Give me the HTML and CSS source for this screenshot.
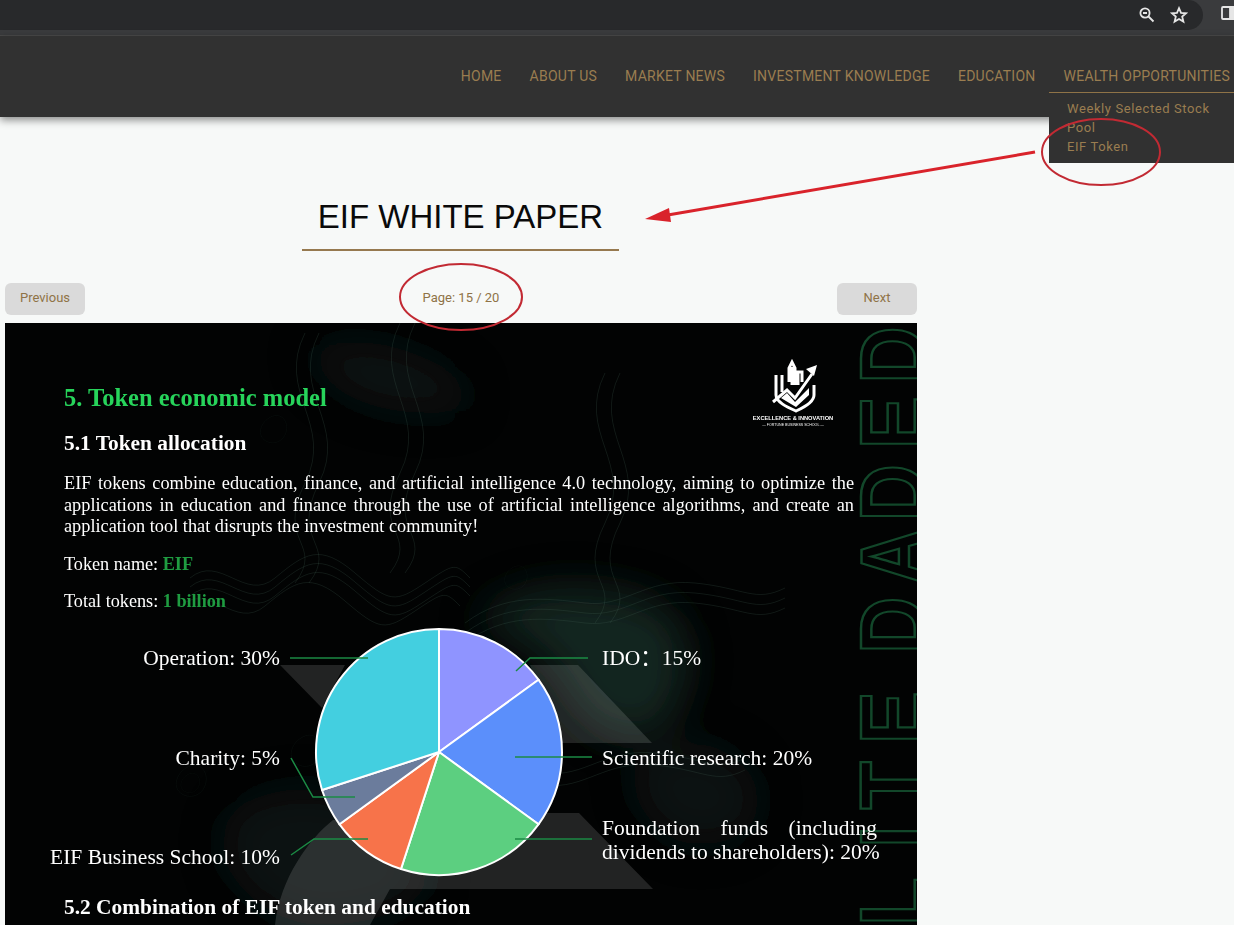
FILE: index.html
```html
<!DOCTYPE html>
<html lang="en">
<head>
    <meta charset="UTF-8">
    <title>EIF White Paper</title>
    <link rel="stylesheet" href="styles.css">
</head>
<body>
    <div class="browser-bar">
        <div class="omnibox">
            <svg class="bar-icon" viewBox="0 0 18 18"><circle cx="7" cy="7" r="4.6"/><path d="M5 7h4M10.5 10.5l5 5"/></svg>
            <svg class="bar-icon" viewBox="0 0 18 18"><path d="M9 2.2l2 4.7 5 .4-3.8 3.3 1.2 5L9 13l-4.4 2.6 1.2-5L2 7.3l5-.4z"/></svg>
        </div>
        <svg class="bar-icon side-panel" viewBox="0 0 18 18"><rect x="2" y="3" width="14" height="12" rx="1"/><path d="M10 3v12h6V3z" class="side-fill"/></svg>
    </div>

    <header class="site-header">
        <nav class="main-nav">
            <a href="#">HOME</a>
            <a href="#">ABOUT US</a>
            <a href="#">MARKET NEWS</a>
            <a href="#">INVESTMENT KNOWLEDGE</a>
            <a href="#">EDUCATION</a>
            <a href="#">WEALTH OPPORTUNITIES</a>
        </nav>
        <div class="dropdown">
            <a href="#">Weekly Selected Stock Pool</a>
            <a href="#">EIF Token</a>
        </div>
    </header>

    <main class="paper">
        <h1 class="paper-title">EIF WHITE PAPER</h1>
        <div class="pager">
            <button>Previous</button>
            <span>Page: 15 / 20</span>
            <button>Next</button>
        </div>

        <section class="slide">
            <svg class="slide-bg" viewBox="0 0 912 602">
                <defs>
                    <filter id="soft"><feGaussianBlur stdDeviation="20"/></filter>
                    <path id="wave1" d="M185 255c30-25 55 25 85 0s45-35 80-5 40 30 70 10 30-20 45-5"/>
                    <path id="wave2" d="M460 300c40-30 80-25 120-20s60-25 110-20 60 20 90 5"/>
                    <path id="wave3" d="M300 10c-30 60 30 90 0 150s20 60-10 100"/>
                    <path id="wave4" d="M40 0c30-20 55 5 50 35s-35 45-60 30-15-50 10-65z"/>
                </defs>
                <g filter="url(#soft)">
                    <path class="smear" d="M470 300c40-40 100-40 150-30s70 40 60 90-50 70-90 40-20-70-120-100z"/>
                    <path class="smear dim" d="M300 30c40-20 90-10 130 10s50 50 0 50-100-10-130-60z"/>
                    <path class="smear dim" d="M240 480c60-30 130-10 170 40s-20 80-90 82-140-80-80-122z"/>
                    <path class="smear dim" d="M640 430c40-20 90-10 110 30s-30 70-70 60-70-70-40-90z"/>
                </g>
                <g class="contours">
                    <use href="#wave1"/>
                    <use href="#wave1" y="9"/>
                    <use href="#wave1" y="18"/>
                    <use href="#wave1" x="-10" y="28"/>
                    <use href="#wave2"/>
                    <use href="#wave2" y="10"/>
                    <use href="#wave2" y="20"/>
                    <use href="#wave2" x="-40" y="170"/>
                    <use href="#wave2" x="-40" y="182"/>
                    <use href="#wave3"/>
                    <use href="#wave3" x="14"/>
                    <use href="#wave3" x="95" y="-10"/>
                    <use href="#wave3" x="110" y="-10"/>
                    <use href="#wave3" x="300" y="40"/>
                    <use href="#wave3" x="315" y="40"/>
                    <use href="#wave4" transform="translate(165 445) scale(.4)"/>
                    <use href="#wave4" transform="translate(172 452) scale(.25)"/>
                    <use href="#wave4" transform="translate(280 415) scale(.4)"/>
                    <use href="#wave4" transform="translate(495 245) scale(.3)"/>
                    <use href="#wave4" transform="translate(250 95) scale(.35)"/>
                </g>
                <g class="shards">
                    <polygon points="275,342 340,342 317,385"/>
                    <polygon points="525,342 573,342 647,420 555,420"/>
                    <path d="M328 497C305 515 275 555 270 602H365L385 566H648L574 490H535z"/>
                </g>
                <text class="side-word" transform="translate(920 602) rotate(-90) scale(.85 1)" x="-1 91 136 213 290 319 400 475 560 637" y="0">LITE DADED</text>
            </svg>

            <svg class="slide-logo" viewBox="0 0 95 78">
                <path class="logo-line" d="M31 20v20c0 7 11 12 20 16 9-4 18-9 18-16V30M37 20v17M47 30V12M44 27V13l3-6 3 6v17M53 30V17h4v10"/>
                <path class="logo-fill" d="M36 43l6-5 8 9 14-14v7L51 52z"/>
                <path class="logo-line" d="M28 47l14-12 8 8 17-24"/>
                <path class="logo-fill" d="M72 10l-11 4 8 7z"/>
                <text class="logo-name" x="48" y="65">EXCELLENCE &amp; INNOVATION</text>
                <text class="logo-sub" x="48" y="71">— FORTUNE BUSINESS SCHOOL —</text>
            </svg>

            <div class="slide-copy">
                <h2>5. Token economic model</h2>
                <h3>5.1 Token allocation</h3>
                <p class="intro">EIF tokens combine education, finance, and artificial intelligence 4.0 technology, aiming to optimize the applications in education and finance through the use of artificial intelligence algorithms, and create an application tool that disrupts the investment community!</p>
                <p class="fact">Token name: <b>EIF</b></p>
                <p class="fact">Total tokens: <b>1 billion</b></p>
            </div>

            <svg class="pie" viewBox="0 0 912 602">
                <g class="slices">
                    <path fill="#8f94ff" d="M434 429V306A123 123 0 0 1 533.500 356.700z"/>
                    <path fill="#5b8ffb" d="M434 429L533.500 356.700A123 123 0 0 1 533.500 501.300z"/>
                    <path fill="#5ccf80" d="M434 429L533.500 501.300A123 123 0 0 1 396 546z"/>
                    <path fill="#f7734a" d="M434 429L396 546A123 123 0 0 1 334.500 501.300z"/>
                    <path fill="#6b7c9c" d="M434 429L334.500 501.300A123 123 0 0 1 317 467z"/>
                    <path fill="#43cfe0" d="M434 429L317 467A123 123 0 0 1 434 306z"/>
                </g>
                <g class="leaders">
                    <path d="M285 335h78"/>
                    <path d="M511 348l14-13h58"/>
                    <path d="M510 434h77"/>
                    <path d="M510 516h77"/>
                    <path d="M286 435l22 39h42"/>
                    <path d="M286 532l23-16h54"/>
                </g>
            </svg>

            <span class="pie-label left op">Operation: 30%</span>
            <span class="pie-label left ch">Charity: 5%</span>
            <span class="pie-label left sc">EIF Business School: 10%</span>
            <span class="pie-label ido">IDO：15%</span>
            <span class="pie-label re">Scientific research: 20%</span>
            <span class="pie-label fd"><span class="fd-first">Foundation funds (including</span>dividends to shareholders): 20%</span>

            <h3 class="next-head">5.2 Combination of EIF token and education</h3>
        </section>
    </main>

    <!-- red marks drawn on top of the screenshot -->
    <svg class="marks" viewBox="0 0 1234 925">
        <ellipse cx="1101" cy="152" rx="59" ry="33"/>
        <ellipse cx="461" cy="297" rx="61" ry="33"/>
        <path d="M1035 152L662 216"/>
        <path class="arrow-head" d="M645 219l24-11 2 14z"/>
    </svg>
</body>
</html>
```

FILE: styles.css
```css
* {
    box-sizing: border-box;
}
html, body {
    height: 925px;
    overflow: hidden;
}
body {
    margin: 0;
    background: #f7f9f8;
    font-family: Roboto, "Liberation Sans", sans-serif;
    position: relative;
}
a {
    text-decoration: none;
    color: inherit;
}

/* browser chrome */
.browser-bar {
    height: 36px;
    background: #3a3b3d;
    border-bottom: 1px solid #4a4a4a;
    display: flex;
    align-items: flex-start;
    justify-content: flex-end;
}
.omnibox {
    width: 100%;
    height: 30px;
    margin-right: 31px;
    padding-right: 15px;
    background: #28292b;
    border-radius: 0 15px 15px 0;
    display: flex;
    align-items: center;
    justify-content: flex-end;
    gap: 14px;
}
.bar-icon {
    width: 18px;
    height: 18px;
    fill: none;
    stroke: #e6e6e6;
    stroke-width: 1.8;
    flex: none;
}
.side-panel {
    position: absolute;
    top: 4px;
    left: 1220px;
}
.side-fill {
    fill: #e6e6e6;
}

/* site header */
.site-header {
    height: 81px;
    background: #313131;
    box-shadow: 0 3px 8px rgba(0,0,0,0.45);
    position: relative;
}
.main-nav {
    display: flex;
    justify-content: flex-end;
    gap: 28px;
    padding: 32px 4px 0 0;
    font-size: 14px;
    line-height: 16px;
    letter-spacing: 0.25px;
    color: #9a7d50;
    white-space: nowrap;
}
.dropdown {
    position: absolute;
    top: 56px;
    right: 0;
    width: 185px;
    height: 71px;
    padding: 6px 10px 0 18px;
    background: #313131;
    border-top: 1px solid #8f7347;
    font-size: 13px;
    line-height: 19px;
    letter-spacing: 0.6px;
    color: #9a7d50;
}
.dropdown a {
    display: block;
}

/* paper */
.paper {
    width: 912px;
    margin-left: 5px;
}
.paper-title {
    width: 317px;
    margin: 0 0 0 297px;
    padding: 81px 0 14px;
    border-bottom: 2px solid #96794f;
    font-family: "Liberation Sans", Arial, sans-serif;
    font-size: 33px;
    line-height: 37px;
    font-weight: 400;
    text-align: center;
    color: #0a0a0a;
}
.pager {
    height: 32px;
    margin: 32px 0 8px;
    display: flex;
    align-items: center;
    justify-content: space-between;
    font-size: 13px;
    line-height: 30px;
    color: #8f7347;
}
.pager button {
    width: 80px;
    height: 32px;
    padding: 0 0 2px;
    border: none;
    border-radius: 6px;
    background: #dadada;
    font: inherit;
    color: #8f7347;
}
.pager span {
    padding-bottom: 2px;
}

/* slide */
.slide {
    height: 602px;
    background: #020303;
    color: #fff;
    font-family: "Liberation Serif", "Times New Roman", "Noto Sans CJK SC", serif;
    position: relative;
    overflow: hidden;
}
.slide-bg, .pie {
    position: absolute;
    inset: 0;
    width: 912px;
    height: 602px;
}
.smear {
    fill: #1f3a30;
    opacity: 0.6;
}
.smear.dim {
    fill: #16241f;
    opacity: 0.5;
}
.contours use {
    fill: none;
    stroke: #48695b;
    stroke-width: 1;
    opacity: 0.22;
}
.shards polygon, .shards path {
    fill: rgba(255,255,255,0.13);
}
.side-word {
    font-family: "Liberation Sans", Arial, sans-serif;
    font-size: 93px;
    font-weight: 700;
    fill: #020303;
    stroke: #12472a;
    stroke-width: 2.500;
}
.slide-logo {
    position: absolute;
    top: 32px;
    left: 740px;
    width: 95px;
    height: 78px;
}
.logo-fill {
    fill: #fff;
}
.logo-line {
    fill: none;
    stroke: #fff;
    stroke-width: 3;
}
.logo-name, .logo-sub {
    font-family: "Liberation Sans", Arial, sans-serif;
    fill: #fff;
    text-anchor: middle;
}
.logo-name {
    font-size: 5.700px;
    font-weight: 700;
}
.logo-sub {
    font-size: 3.600px;
}
.slide-copy {
    position: relative;
    width: 849px;
    padding: 59px 0 0 59px;
}
.slide-copy h2 {
    margin: 0 0 16px;
    font-size: 24.500px;
    line-height: 32px;
    color: #27d45b;
}
.slide-copy h3, .next-head {
    margin: 0;
    font-size: 21.400px;
    line-height: 26px;
}
.intro {
    margin: 17px 0 15px;
    font-size: 18.300px;
    line-height: 21.500px;
    text-align: justify;
}
.fact {
    margin: 0 0 15px;
    font-size: 18.200px;
    line-height: 22px;
}
.fact b {
    color: #1f9c41;
}
.slices path {
    stroke: #fff;
    stroke-width: 2;
    stroke-linejoin: round;
}
.leaders path {
    fill: none;
    stroke: #1b8a44;
    stroke-width: 1.500;
}
.pie-label {
    position: absolute;
    font-size: 21.500px;
    line-height: 24px;
    white-space: nowrap;
}
.pie-label.left {
    right: 637px;
    text-align: right;
}
.op { top: 323px; }
.ch { top: 423px; }
.sc { top: 522px; }
.ido { top: 323px; left: 597px; }
.re { top: 423px; left: 597px; }
.fd {
    top: 493px;
    left: 597px;
}
.fd-first {
    display: block;
    width: 275px;
    text-align: justify;
    text-align-last: justify;
    white-space: normal;
}
.next-head {
    position: absolute;
    top: 571px;
    left: 59px;
}

/* annotations */
.marks {
    position: absolute;
    inset: 0;
    width: 1234px;
    height: 925px;
    pointer-events: none;
}
.marks ellipse {
    fill: none;
    stroke: #c22a33;
    stroke-width: 2;
}
.marks path {
    fill: none;
    stroke: #d9232b;
    stroke-width: 3;
}
.marks .arrow-head {
    fill: #d9232b;
    stroke: none;
}
```
